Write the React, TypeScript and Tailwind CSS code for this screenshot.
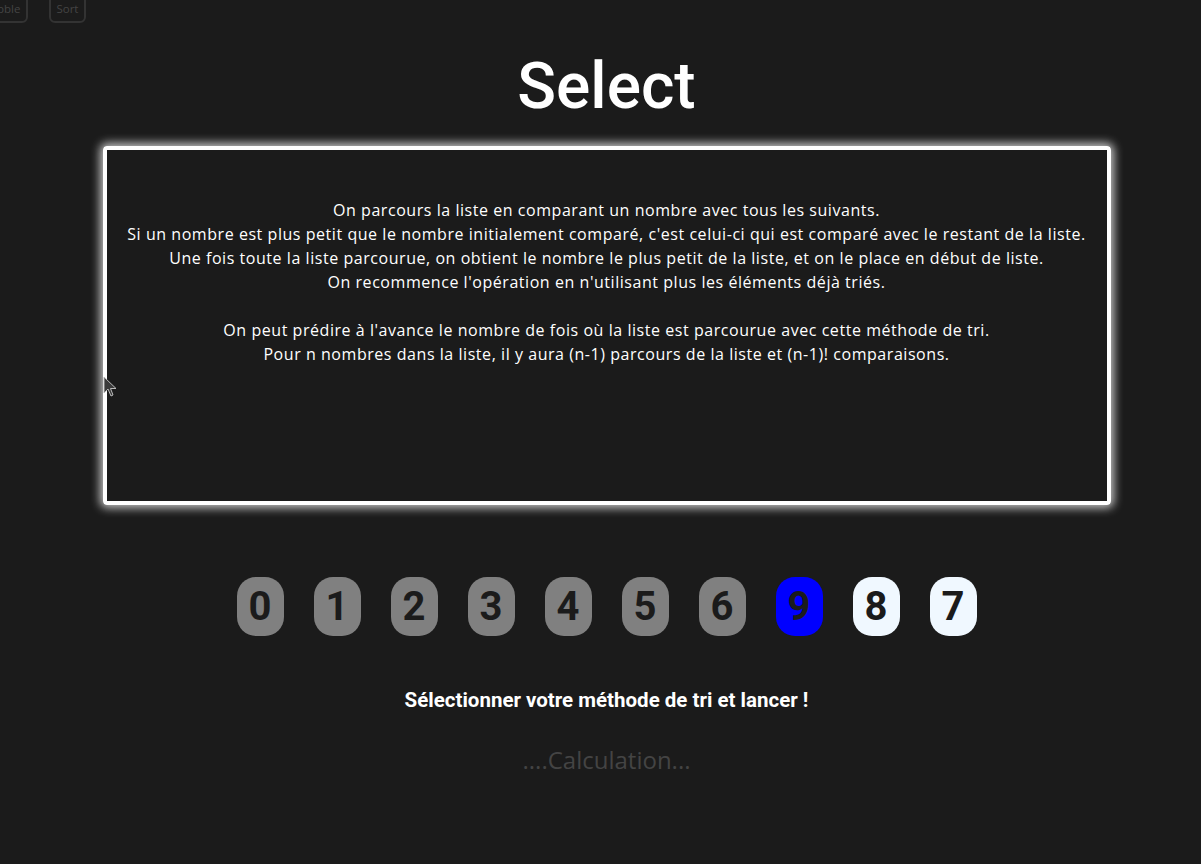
import React from "react";

const digits: { v: string; kind: "done" | "active" | "todo" }[] = [
  { v: "0", kind: "done" },
  { v: "1", kind: "done" },
  { v: "2", kind: "done" },
  { v: "3", kind: "done" },
  { v: "4", kind: "done" },
  { v: "5", kind: "done" },
  { v: "6", kind: "done" },
  { v: "9", kind: "active" },
  { v: "8", kind: "todo" },
  { v: "7", kind: "todo" },
];

export default function App() {
  return (
    <div className="relative min-h-[864px] w-full overflow-hidden bg-[#1b1b1b]">
      <div className="flex gap-[21px] -mt-[6px] -ml-[25px]">
        <button className="h-[29px] px-[5.5px] rounded-[6px] border-2 border-[#333333] text-[#444444] text-[11.5px] [font-family:'Open_Sans',sans-serif]">
          Bubble
        </button>
        <button className="h-[29px] px-[5.5px] rounded-[6px] border-2 border-[#333333] text-[#444444] text-[11.5px] [font-family:'Open_Sans',sans-serif]">
          Sort
        </button>
      </div>

      <div className="flex flex-col items-center pl-[12px]">
        <h1 className="mt-[24px] text-[64px] leading-[80px] font-medium text-white [font-family:Roboto,sans-serif]">
          Select
        </h1>

        <div className="mt-[19px] w-[1008px] h-[359px] rounded-[4px] border-4 border-white shadow-[0_0_10px_3px_rgba(255,255,255,0.75)] pt-[48px] text-center text-[16px] leading-[24px] text-white [font-family:'Open_Sans',sans-serif] tracking-[0.55px]">
          <p>On parcours la liste en comparant un nombre avec tous les suivants.</p>
          <p>Si un nombre est plus petit que le nombre initialement comparé, c'est celui-ci qui est comparé avec le restant de la liste.</p>
          <p>Une fois toute la liste parcourue, on obtient le nombre le plus petit de la liste, et on le place en début de liste.</p>
          <p>On recommence l'opération en n'utilisant plus les éléments déjà triés.</p>
          <p>&nbsp;</p>
          <p>On peut prédire à l'avance le nombre de fois où la liste est parcourue avec cette méthode de tri.</p>
          <p>Pour n nombres dans la liste, il y aura (n-1) parcours de la liste et (n-1)! comparaisons.</p>
        </div>

        <div className="mt-[72px] flex gap-[30px]">
          {digits.map((d, i) => (
            <div
              key={i}
              className={
                "w-[47px] h-[59px] rounded-[19px] flex items-center justify-center text-[40px] font-bold text-[#1b1b1b] [font-family:Roboto,sans-serif] " +
                (d.kind === "done"
                  ? "bg-[#808080]"
                  : d.kind === "active"
                  ? "bg-[#0000ff]"
                  : "bg-[#f0f8ff]")
              }
            >
              {d.v}
            </div>
          ))}
        </div>

        <p className="mt-[50px] text-[20.5px] leading-[28px] font-bold text-white [font-family:Roboto,sans-serif]">
          Sélectionner votre méthode de tri et lancer !
        </p>

        <p className="mt-[30px] text-[24px] leading-[32px] text-[#444444] [font-family:'Open_Sans',sans-serif]">
          ....Calculation...
        </p>
      </div>

      <svg
        className="absolute left-[103px] top-[376px]"
        width="14"
        height="22"
        viewBox="0 0 14 22"
      >
        <path
          d="M1 1 L1 17 L5 13 L8 20 L10 19 L7.5 12.5 L13 12.5 Z"
          fill="#3a3a3a"
          stroke="#bbbbbb"
          strokeWidth="1"
        />
      </svg>
    </div>
  );
}
